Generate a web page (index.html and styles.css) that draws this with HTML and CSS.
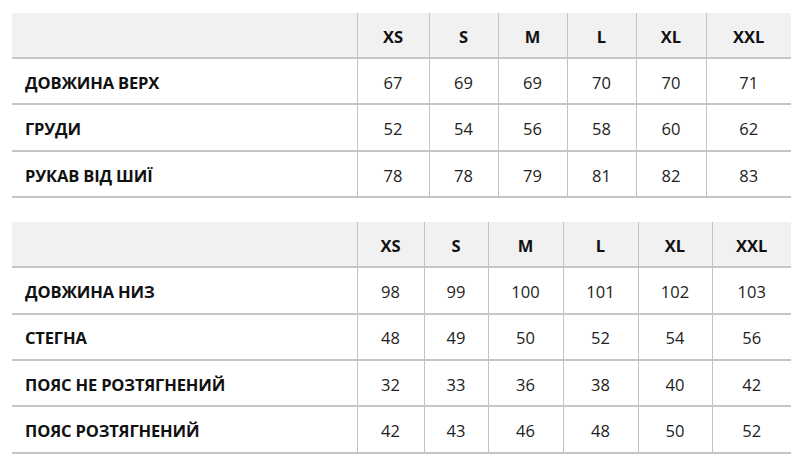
FILE: index.html
```html
<!DOCTYPE html>
<html lang="uk">
<head>
<meta charset="utf-8">
<link rel="stylesheet" href="styles.css">
</head>
<body>
<div class="page">
  <table class="sizes sizes-top">
    <colgroup>
      <col class="c-label"><col class="c1"><col class="c2"><col class="c3"><col class="c4"><col class="c5"><col class="c6">
    </colgroup>
    <thead>
      <tr><th></th><th>XS</th><th>S</th><th>M</th><th>L</th><th>XL</th><th>XXL</th></tr>
    </thead>
    <tbody>
      <tr><td class="label">ДОВЖИНА ВЕРХ</td><td>67</td><td>69</td><td>69</td><td>70</td><td>70</td><td>71</td></tr>
      <tr><td class="label">ГРУДИ</td><td>52</td><td>54</td><td>56</td><td>58</td><td>60</td><td>62</td></tr>
      <tr><td class="label">РУКАВ ВІД ШИЇ</td><td>78</td><td>78</td><td>79</td><td>81</td><td>82</td><td>83</td></tr>
    </tbody>
  </table>

  <table class="sizes sizes-bottom">
    <colgroup>
      <col class="c-label"><col class="c1"><col class="c2"><col class="c3"><col class="c4"><col class="c5"><col class="c6">
    </colgroup>
    <thead>
      <tr><th></th><th>XS</th><th>S</th><th>M</th><th>L</th><th>XL</th><th>XXL</th></tr>
    </thead>
    <tbody>
      <tr><td class="label">ДОВЖИНА НИЗ</td><td>98</td><td>99</td><td>100</td><td>101</td><td>102</td><td>103</td></tr>
      <tr><td class="label">СТЕГНА</td><td>48</td><td>49</td><td>50</td><td>52</td><td>54</td><td>56</td></tr>
      <tr><td class="label">ПОЯС НЕ РОЗТЯГНЕНИЙ</td><td>32</td><td>33</td><td>36</td><td>38</td><td>40</td><td>42</td></tr>
      <tr><td class="label">ПОЯС РОЗТЯГНЕНИЙ</td><td>42</td><td>43</td><td>46</td><td>48</td><td>50</td><td>52</td></tr>
    </tbody>
  </table>
</div>
</body>
</html>
```

FILE: styles.css
```css
html, body {
  margin: 0;
  padding: 0;
  background: #ffffff;
}

body {
  font-family: "Open Sans", "Noto Sans", sans-serif;
  color: #1a1a1a;
}

.page {
  padding: 13px 9px 0 12px;
  display: flex;
  flex-direction: column;
  gap: 24px;
}

.sizes {
  width: 779px;
  border-collapse: collapse;
  table-layout: fixed;
}

.sizes .c-label { width: 345px; }

.sizes-top .c1 { width: 72px; }
.sizes-top .c2 { width: 69px; }
.sizes-top .c3 { width: 69px; }
.sizes-top .c4 { width: 69px; }
.sizes-top .c5 { width: 70px; }
.sizes-top .c6 { width: 85px; }

.sizes-bottom .c1 { width: 67px; }
.sizes-bottom .c2 { width: 64px; }
.sizes-bottom .c3 { width: 75px; }
.sizes-bottom .c4 { width: 75px; }
.sizes-bottom .c5 { width: 74px; }
.sizes-bottom .c6 { width: 79px; }

.sizes th,
.sizes td {
  padding: 3px 0 0 0;
  text-align: center;
  vertical-align: middle;
  font-size: 16.5px;
  line-height: 1.2;
  border-bottom: 2px solid #c6c6c6;
  border-left: 1px solid #c2c2c2;
}

.sizes th:first-child,
.sizes td:first-child {
  border-left: none;
}

.sizes th {
  height: 41px;
  background: #f1f1f1;
  font-weight: 700;
  color: #111111;
}

.sizes td {
  height: 41.4px;
  font-weight: 400;
  color: #222222;
}

.sizes td.label {
  text-align: left;
  padding-left: 13px;
  font-weight: 700;
  color: #111111;
  letter-spacing: -0.15px;
}
```
